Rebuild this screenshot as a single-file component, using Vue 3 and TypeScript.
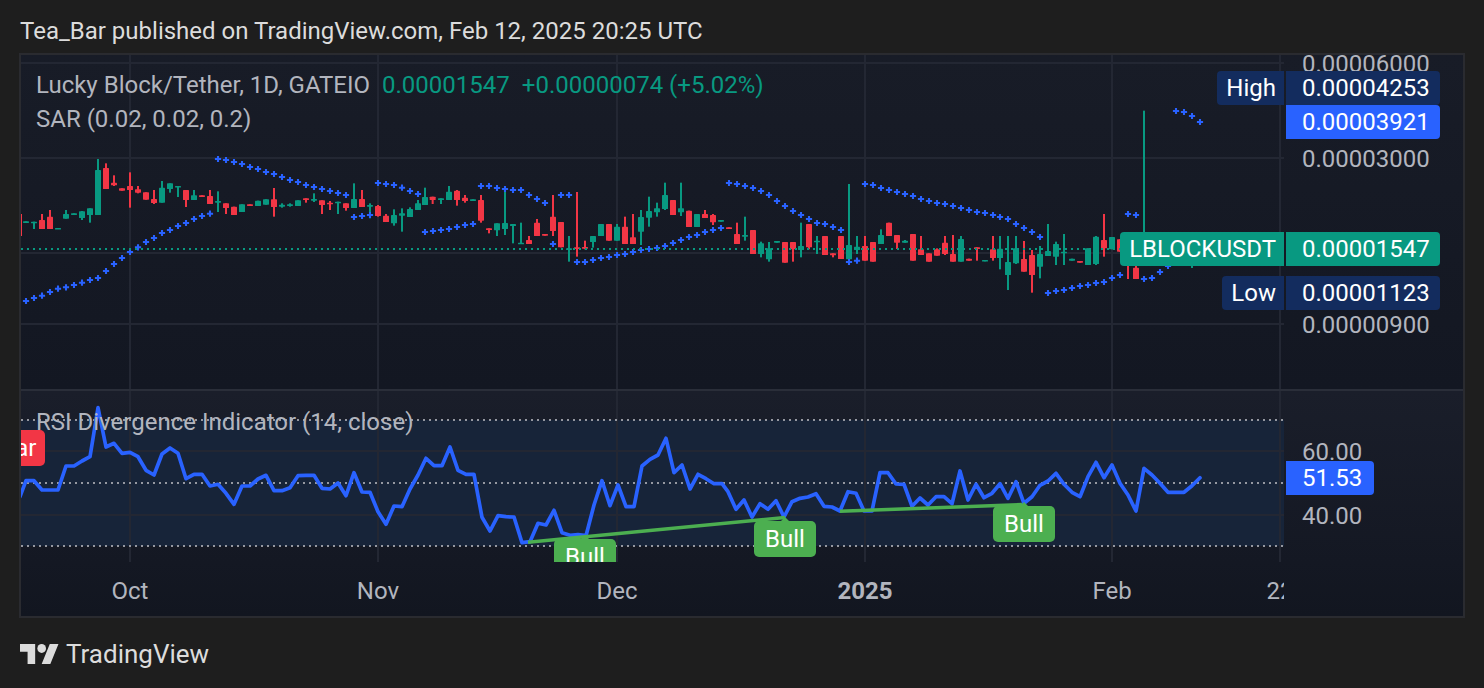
<script setup lang="ts">
type Row = [number, number, number, number, number, number];
// rows: zoomed x, wick top, wick bottom, body top, body bottom, 1 = up / 0 = down
const G = 1;
const R = 0;
const groupA: Row[] = [
  [78,514,516,514,516,G],[102,515,537,515,518,G],[126,492,537,510,537,R],[150,480,537,500,537,R],[174,534,536,534,536,G],
  [198,480,506,492,506,G],[222,490,493,490,493,G],[246,483,510,484,504,G],[270,475,518,475,495,G],[294,327,495,360,495,G],
  [318,340,417,354,417,R],[342,376,408,398,406,R],[366,415,422,415,422,R],[390,367,473,408,420,R],[414,408,430,418,428,R],
  [438,427,449,427,449,R],[462,420,462,447,459,R],[486,393,458,413,458,G],[510,400,428,400,417,G],[534,408,441,408,412,G],
  [558,420,471,420,450,R],[582,420,450,436,450,G],[606,436,440,436,440,R],[630,420,462,438,462,R],[654,424,486,453,458,G],
  [678,460,492,460,474,R],[702,470,495,470,495,R],[726,463,486,463,486,G],[750,463,467,463,467,R],[774,452,468,452,468,G],
  [798,448,464,448,464,G],[822,414,500,448,471,R],[846,460,473,464,470,G],[870,460,470,463,467,G],[894,451,468,451,468,G],
  [918,445,458,445,450,R],[942,430,456,447,452,G],[966,451,492,451,465,R],[990,453,480,458,463,R],[1014,455,492,455,460,G],
  [1038,460,482,460,474,R],[1062,400,474,447,474,G],[1086,420,471,447,471,R],[1110,460,505,465,470,G],[1134,465,500,468,498,R],
  [1158,492,516,497,516,R],[1182,478,527,495,520,G],
];
const groupB: Row[] = [
  [6,175,245,190,197,G],[30,172,201,177,201,G],[54,150,180,160,180,G],[75,113,165,141,165,G],[98,140,162,140,150,R],
  [123,145,162,145,150,G],[147,108,150,125,150,G],[171,120,167,122,150,R],[195,135,158,143,153,R],[219,148,152,148,152,G],
  [243,135,218,150,212,R],[267,235,250,235,240,R],[291,220,258,220,241,G],[315,115,255,219,237,G],[339,222,280,222,228,G],
  [363,218,280,278,282,G],[387,258,282,270,282,R],[411,207,258,218,258,R],[435,252,257,252,257,R],[459,135,258,200,243,R],
  [483,216,292,216,292,R],[507,258,335,295,298,G],[531,126,320,292,296,R],[555,272,298,291,296,R],[579,258,293,258,276,G],
  [603,222,258,222,258,G],[627,222,272,222,272,R],[651,222,272,230,272,G],[675,200,282,230,282,R],[699,192,282,262,282,R],
  [723,180,285,201,245,G],[747,140,230,183,203,G],[771,158,200,175,187,G],[795,98,180,135,177,G],[819,150,195,150,195,R],
  [843,98,198,175,187,G],[867,182,231,182,231,R],[891,192,231,192,231,G],[915,180,204,192,204,R],[939,192,225,195,217,R],
  [963,210,215,210,215,G],[987,232,237,232,237,R],[1011,218,282,252,282,R],[1035,200,272,255,260,G],[1059,240,312,240,312,R],
  [1083,275,322,280,312,G],[1107,276,335,295,328,G],[1131,273,278,273,278,G],[1155,276,338,276,338,R],[1179,276,335,276,298,R],
];
const groupC: Row[] = [
  [3,158,262,228,240,G],[27,162,238,162,232,R],[51,198,252,212,217,G],[75,198,255,198,255,R],[99,250,262,250,256,R],
  [123,198,267,198,267,R],[147,42,275,225,268,G],[171,198,252,230,240,G],[195,198,272,228,272,R],[219,216,275,216,275,R],
  [243,178,222,195,222,G],[267,158,198,158,198,R],[291,195,237,195,218,R],[315,210,218,212,218,G],[339,192,272,192,272,R],
  [363,198,255,238,255,R],[387,250,275,250,275,R],[411,235,257,238,257,R],[435,198,255,218,252,R],[459,195,275,252,275,R],
  [483,198,275,207,275,G],[507,266,272,266,272,R],[531,232,272,232,237,R],[555,270,274,270,274,G],[579,198,272,238,264,R],
  [600,198,298,236,264,G],[624,198,360,276,315,G],[648,198,282,235,280,G],[672,213,305,267,305,R],[696,240,368,255,315,R],
  [720,228,325,252,290,G],[744,162,258,243,258,G],[768,215,285,222,260,G],[792,192,285,245,250,G],[816,266,272,266,272,G],
  [840,273,278,273,278,R],[864,235,285,235,285,G],[888,198,285,200,282,G],[912,132,260,210,235,R],[936,201,238,201,238,G],
  [960,208,245,208,245,R],[984,245,327,250,250,R],[1008,280,327,293,327,R],[1032,-178,190,188,190,G],
];

const toCandles = (rows: Row[], ox: number, oy: number) =>
  rows.map(([x, wt, wb, bt, bb, up]) => ({
    x: ox + x / 3,
    wickTop: oy + wt / 3,
    wickH: (wb - wt) / 3,
    bodyTop: oy + bt / 3,
    bodyH: Math.max((bb - bt) / 3, 1.6),
    color: up ? "#089981" : "#f23645",
  }));

const candles = [
  ...toCandles(groupA, 0, 50),
  ...toCandles(groupB, 400, 150),
  ...toCandles(groupC, 800, 170),
  { x: 21, wickTop: 214, wickH: 22, bodyTop: 214, bodyH: 0, color: "#f23645" },
  { x: 1192, wickTop: 262, wickH: 6, bodyTop: 262, bodyH: 0, color: "#089981" },
];

const crossPath = (pts: number[][], ox: number, oy: number) =>
  pts
    .map(([x, y]) => {
      const px = ox + x / 3;
      const py = oy + y / 3;
      return `M${(px - 3.1).toFixed(1)} ${py.toFixed(1)}h6.2M${px.toFixed(1)} ${(py - 3.1).toFixed(1)}v6.2`;
    })
    .join("");

const sarPath =
  crossPath([[78,753],[102,744],[126,737],[150,726],[174,716],[198,712],[222,705],[246,698],[270,690],[294,684],[318,663],[342,642],[366,624],[390,606],[414,592],[438,576],[462,564],[486,549],[510,540],[534,528],[558,519],[582,507],[606,498],[630,491],
    [654,327],[678,330],[702,336],[726,342],[750,351],[774,357],[798,366],[822,372],[846,381],[870,390],[894,396],[918,405],[942,411],[966,417],[990,423],[1014,429],[1038,435],
    [1062,501],[1086,498],[1110,495],[1134,399],[1158,402],[1182,405]], 0, 50) +
  crossPath([[6,113],[30,123],[54,132],[75,246],[99,243],[123,240],[147,237],[171,231],[195,225],[219,222],
    [243,108],[267,108],[291,114],[315,117],[339,120],[363,120],[387,135],[411,147],[435,159],[459,282],[483,135],[507,135],
    [531,336],[555,336],[579,330],[603,324],[627,321],[651,315],[675,312],[699,306],[723,300],[747,297],[771,294],[795,288],[819,279],[843,270],[867,261],[891,255],[915,246],[939,240],[963,234],
    [987,99],[1011,102],[1035,108],[1059,114],[1083,123],[1107,135],[1131,153],[1155,168],[1179,183]], 400, 150) +
  crossPath([[3,135],[27,147],[51,159],[75,162],[99,171],[123,180],[147,276],[171,272],
    [195,42],[219,45],[243,54],[267,60],[291,66],[315,72],[339,78],[363,87],[387,93],[411,99],[435,102],[459,108],[483,114],[507,120],[531,126],[555,129],[579,135],[600,141],[624,147],[648,162],[672,174],[696,186],[720,201],
    [744,369],[768,363],[792,360],[816,354],[840,348],[864,345],[888,339],[912,336],[936,324],[960,315],[984,132],[1008,135],
    [1032,327],[1056,324],[1080,306],[1104,288]], 800, 170) +
  crossPath([[228,183],[252,186],[276,198],[300,216]], 1100, 50);

const polyline = (pts: number[][], ox: number, oy: number) =>
  pts.map(([x, y]) => `${(ox + x / 3).toFixed(1)},${(oy + y / 3).toFixed(1)}`);

const rsiPoints = [
  ...polyline([[60,335],[78,287],[102,287],[126,315],[150,315],[174,315],[198,243],[222,243],[246,228],[270,215],[294,68],[318,186],[342,175],[366,205],[390,202],[414,215],[438,256],[462,270],[486,207],[510,189],[534,205],[558,281],[582,268],[606,268],[630,303],[654,298],[678,325],[702,358],[726,303],[750,303],[774,282],[798,271],[822,317],[846,317],[870,308],[894,272],[918,271],[942,271],[966,310],[990,312],[1014,294],[1038,332],[1062,263],[1086,321],[1110,322],[1134,380],[1158,418],[1182,363],[1206,365],[1230,312],[1254,270],[1278,220],[1302,242],[1326,242],[1350,186],[1374,256],[1398,268],[1422,268],[1446,397],[1470,438],[1494,392]], 0, 385),
  ...polyline([[18,395],[42,396],[66,473],[90,470],[114,415],[138,420],[162,376],[186,443],[210,451],[234,449],[258,452],[282,360],[306,287],[330,362],[354,300],[378,365],[402,365],[426,243],[450,223],[474,210],[498,160],[522,263],[546,240],[570,312],[594,268],[618,281],[642,296],[666,296],[684,320],[708,373],[732,345],[756,396],[780,356],[804,373],[828,347],[852,396],[876,350],[900,340],[924,336],[948,326],[972,364],[996,366],[1020,378],[1044,320],[1068,325],[1092,378],[1116,378],[1140,263],[1164,263],[1188,297],[1212,298],[1236,364],[1260,339],[1284,360],[1308,335],[1332,335],[1356,356],[1380,258],[1404,345],[1428,298],[1452,338],[1476,325]], 500, 385),
  ...polyline([[0,296],[24,340],[48,290],[72,355],[96,335],[120,301],[144,288],[168,265],[192,298],[216,322],[240,335],[264,275],[288,232],[312,278],[336,240],[360,295],[384,330],[408,378],[432,250],[456,270],[480,295],[504,322],[528,322],[552,322],[576,302],[600,278]], 1000, 385),
].join(" ");

const verticalGrid = [130, 378, 617, 865, 1112, 1280];
const mainGrid = [63, 158, 253, 324];
const rsiGrid = [451, 515];
const rsiDotted = [420, 483, 546];

const mainTicks = [
  { label: "0.00006000", y: 64 },
  { label: "0.00003000", y: 159 },
  { label: "0.00000900", y: 325 },
];
const tags = [
  { name: "High", value: "0.00004253", top: 71, tone: "navy" },
  { name: "", value: "0.00003921", top: 105, tone: "blue" },
  { name: "LBLOCKUSDT", value: "0.00001547", top: 232, tone: "teal" },
  { name: "Low", value: "0.00001123", top: 276, tone: "navy" },
];
const rsiTicks = [
  { label: "60.00", y: 452 },
  { label: "40.00", y: 516 },
];
const bulls = [
  { x: 585, y: 539 },
  { x: 785, y: 521 },
  { x: 1024, y: 506 },
];
const timeLabels = [
  { label: "Oct", x: 130, bold: false },
  { label: "Nov", x: 378, bold: false },
  { label: "Dec", x: 617, bold: false },
  { label: "2025", x: 865, bold: true },
  { label: "Feb", x: 1112, bold: false },
  { label: "22", x: 1280, bold: false },
];
</script>

<template>
  <div class="page">
    <header class="byline">Tea_Bar published on TradingView.com, Feb 12, 2025 20:25 UTC</header>

    <section class="chart">
      <div class="pane main-pane">
        <svg class="plot" width="1263" height="334" viewBox="21 55 1263 334">
          <line v-for="x in verticalGrid" :key="x" :x1="x" :x2="x" y1="55" y2="389" class="grid" />
          <line v-for="y in mainGrid" :key="y" x1="21" x2="1284" :y1="y" :y2="y" class="grid" />
          <g v-for="(c, i) in candles" :key="i" :fill="c.color">
            <rect :x="c.x - 1" :y="c.wickTop" width="2" :height="c.wickH" />
            <rect :x="c.x - 3" :y="c.bodyTop" width="6" :height="c.bodyH" rx="0.6" />
          </g>
          <path :d="sarPath" class="sar" />
          <line x1="21" x2="1284" y1="249" y2="249" class="last-price" />
        </svg>

        <div class="legend">
          <div class="legend-row">
            <span>Lucky Block/Tether, 1D, GATEIO</span>
            <span class="up gap-a">0.00001547</span>
            <span class="up gap-b">+0.00000074 (+5.02%)</span>
          </div>
          <div class="legend-row">SAR (0.02, 0.02, 0.2)</div>
        </div>

        <span
          v-for="t in mainTicks"
          :key="t.label"
          class="tick"
          :style="{ top: t.y - 55 - 17 + 'px' }"
        >{{ t.label }}</span>

        <div
          v-for="t in tags"
          :key="t.value"
          class="tag"
          :class="t.tone"
          :style="{ top: t.top - 55 + 'px' }"
        >
          <span v-if="t.name" class="tag-name">{{ t.name }}</span>
          <span class="tag-value">{{ t.value }}</span>
        </div>
      </div>

      <div class="pane rsi-pane">
        <svg class="plot" width="1263" height="171" viewBox="21 391 1263 171">
          <rect x="21" y="420" width="1263" height="126" class="band" />
          <line v-for="x in verticalGrid" :key="x" :x1="x" :x2="x" y1="391" y2="562" class="grid" />
          <line v-for="y in rsiGrid" :key="y" x1="21" x2="1284" :y1="y" :y2="y" class="grid" />
          <line v-for="y in rsiDotted" :key="y" x1="21" x2="1284" :y1="y" :y2="y" class="dotted" />
          <polyline :points="rsiPoints" class="rsi-line" />
          <line x1="528" y1="542.3" x2="785" y2="517.5" class="bull-line" />
          <line x1="840" y1="511.2" x2="1022" y2="504.6" class="bull-line" />
        </svg>

        <div class="pane-clip">
          <span class="flag bear">Bear</span>
          <span
            v-for="b in bulls"
            :key="b.x"
            class="flag bull"
            :style="{ left: b.x - 21 - 31 + 'px', top: b.y - 391 + 'px' }"
          >Bull</span>
        </div>

        <div class="rsi-legend">RSI Divergence Indicator (14, close)</div>

        <span
          v-for="t in rsiTicks"
          :key="t.label"
          class="tick"
          :style="{ top: t.y - 391 - 17 + 'px' }"
        >{{ t.label }}</span>
        <div class="tag blue rsi-tag"><span class="tag-value">51.53</span></div>
      </div>

      <div class="time-axis">
        <div class="time-track">
          <span
            v-for="t in timeLabels"
            :key="t.label"
            class="time-label"
            :class="{ strong: t.bold }"
            :style="{ left: t.x - 21 + 'px' }"
          >{{ t.label }}</span>
        </div>
      </div>
    </section>

    <footer class="brand">
      <svg class="logo" width="39" height="20" viewBox="0 4 36 18" preserveAspectRatio="none">
        <path d="M14 22H7V11H0V4h14v18zM28 22h-8l7.5-18h8L28 22z" />
        <circle cx="20" cy="8" r="4" />
      </svg>
      <span class="brand-name">TradingView</span>
    </footer>
  </div>
</template>

<style>
html,
body {
  margin: 0;
  background: #1e1e1e;
}
</style>

<style scoped>
.page {
  width: 1484px;
  height: 688px;
  box-sizing: border-box;
  padding: 0 19px;
  background: #1e1e1e;
  display: flex;
  flex-direction: column;
  font-family: Roboto, "Liberation Sans", sans-serif;
  font-size: 24px;
  overflow: hidden;
}
.byline {
  height: 53px;
  padding: 8px 1px 0;
  display: flex;
  align-items: center;
  box-sizing: border-box;
  color: #dcdcdc;
}
.chart {
  height: 565px;
  box-sizing: border-box;
  border: 2px solid #2a2b30;
  background: #131722;
  display: flex;
  flex-direction: column;
}
.pane {
  position: relative;
  flex: none;
}
.main-pane {
  height: 334px;
  border-bottom: 2px solid #2a2e39;
  background: linear-gradient(#181c27, #131722);
  overflow: hidden;
}
.rsi-pane {
  height: 171px;
  background: linear-gradient(#1a1e2a, #141823);
}
.plot {
  position: absolute;
  left: 0;
  top: 0;
  display: block;
}
.grid {
  stroke: #232733;
  stroke-width: 2;
}
.sar {
  fill: none;
  stroke: #2962ff;
  stroke-width: 2.1;
}
.last-price {
  stroke: #089981;
  stroke-width: 2;
  stroke-dasharray: 2 4;
}
.band {
  fill: #172439;
}
.dotted {
  stroke: #9598a1;
  stroke-width: 2;
  stroke-dasharray: 2 4;
}
.rsi-line {
  fill: none;
  stroke: #2962ff;
  stroke-width: 3.7;
  stroke-linejoin: round;
  stroke-linecap: round;
}
.bull-line {
  stroke: #4caf50;
  stroke-width: 3.6;
}
.legend {
  position: absolute;
  left: 15px;
  top: 13px;
  color: #b2b5be;
  line-height: 34px;
}
.legend-row {
  white-space: nowrap;
}
.up {
  color: #089981;
}
.gap-a {
  margin-left: 12px;
}
.gap-b {
  margin-left: 12px;
}
.tick {
  position: absolute;
  left: 1281px;
  line-height: 34px;
  color: #b2b5be;
  white-space: nowrap;
}
.tag {
  position: absolute;
  right: 23px;
  display: flex;
  gap: 2px;
  height: 34px;
  line-height: 34px;
  color: #fff;
  white-space: nowrap;
}
.tag-name {
  padding: 0 8px 0 9px;
  border-radius: 4px 0 0 4px;
}
.tag-value {
  width: 154px;
  box-sizing: border-box;
  padding-left: 16px;
  border-radius: 0 4px 4px 0;
}
.navy .tag-name,
.navy .tag-value {
  background: #132c5e;
}
.blue .tag-value {
  background: #2962ff;
}
.teal .tag-name,
.teal .tag-value {
  background: #089981;
}
.rsi-tag {
  top: 70px;
  right: auto;
  left: 1265px;
}
.rsi-tag .tag-value {
  width: 88px;
}
.rsi-legend {
  position: absolute;
  left: 15px;
  top: 14px;
  line-height: 34px;
  color: #b2b5be;
  white-space: nowrap;
}
.pane-clip {
  position: absolute;
  left: 0;
  top: 0;
  width: 1263px;
  height: 171px;
  overflow: hidden;
}
.flag {
  position: absolute;
  width: 62px;
  height: 36px;
  line-height: 36px;
  text-align: center;
  color: #fff;
  border-radius: 5px;
}
.bear {
  left: -38px;
  top: 39px;
  box-sizing: border-box;
  padding-right: 4px;
  background: #f23645;
}
.bull {
  background: #4caf50;
}
.bull::before {
  content: "";
  position: absolute;
  left: 26px;
  top: -4px;
  border-left: 5px solid transparent;
  border-right: 5px solid transparent;
  border-bottom: 5px solid #4caf50;
}
.time-axis {
  flex: none;
  height: 54px;
  background: linear-gradient(#141823, #121620);
}
.time-track {
  position: relative;
  width: 1263px;
  height: 100%;
  overflow: hidden;
}
.time-label {
  position: absolute;
  top: 12px;
  line-height: 34px;
  color: #b2b5be;
  transform: translateX(-50%);
}
.strong {
  font-weight: 700;
}
.brand {
  flex: 1;
  display: flex;
  align-items: center;
  gap: 7px;
  padding: 1px 0 0 1px;
  box-sizing: border-box;
  color: #dcdcdc;
}
.logo {
  fill: #dcdcdc;
  display: block;
}
.brand-name {
  font-size: 26px;
  line-height: 34px;
}
</style>
